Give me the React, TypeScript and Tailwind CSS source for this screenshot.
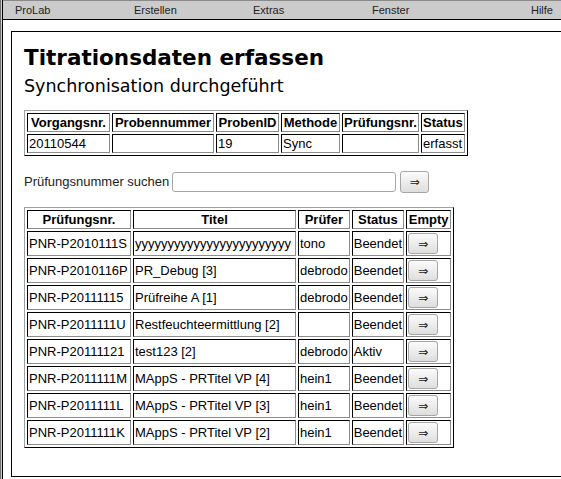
const meta = [
  { label: "Vorgangsnr.", value: "20110544", w: "w-[83px]" },
  { label: "Probennummer", value: "", w: "w-[102px]" },
  { label: "ProbenID", value: "19", w: "w-[63px]" },
  { label: "Methode", value: "Sync", w: "w-[59px]" },
  { label: "Prüfungsnr.", value: "", w: "w-[77px]" },
  { label: "Status", value: "erfasst", w: "w-[43px]" },
];

const rows = [
  { nr: "PNR-P2010111S", titel: "yyyyyyyyyyyyyyyyyyyyyyyy", pruefer: "tono", status: "Beendet" },
  { nr: "PNR-P2010116P", titel: "PR_Debug [3]", pruefer: "debrodo", status: "Beendet" },
  { nr: "PNR-P20111115", titel: "Prüfreihe A [1]", pruefer: "debrodo", status: "Beendet" },
  { nr: "PNR-P2011111U", titel: "Restfeuchteermittlung [2]", pruefer: "", status: "Beendet" },
  { nr: "PNR-P20111121", titel: "test123 [2]", pruefer: "debrodo", status: "Aktiv" },
  { nr: "PNR-P2011111M", titel: "MAppS - PRTitel VP [4]", pruefer: "hein1", status: "Beendet" },
  { nr: "PNR-P2011111L", titel: "MAppS - PRTitel VP [3]", pruefer: "hein1", status: "Beendet" },
  { nr: "PNR-P2011111K", titel: "MAppS - PRTitel VP [2]", pruefer: "hein1", status: "Beendet" },
];

// old-school border="1" look
const tableCls =
  "border-separate border-spacing-[2px] border border-t-[#a0a0a0] border-l-[#a0a0a0] border-r-black border-b-black text-[13px] leading-[15px]";
const cellCls =
  "border border-t-black border-l-black border-r-[#8c8c8c] border-b-[#8c8c8c] p-px text-left font-normal whitespace-nowrap";
const headCls =
  "border border-t-black border-l-black border-r-[#8c8c8c] border-b-[#8c8c8c] p-px text-center font-bold whitespace-nowrap";

function ArrowButton({ className = "" }: { className?: string }) {
  return (
    <button
      className={
        "flex items-center justify-center rounded-[3px] border border-[#a6a6a6] bg-gradient-to-b from-[#fbfbfb] to-[#dedede] text-[12px] leading-none text-[#222] font-['DejaVu_Sans'] " +
        className
      }
    >
      ⇒
    </button>
  );
}

export default function App() {
  return (
    <div className="w-[561px] h-[479px] overflow-hidden bg-white font-['Liberation_Sans',Arial,sans-serif] text-black">
      <div className="h-full border-l border-[#6e6e6e]">
        <div className="h-full border-l border-[#cfcfcf]">
          <div className="h-full border-l border-black flex flex-col">
            {/* Menu */}
            <div className="h-[20px] shrink-0 flex items-center bg-[#cbcbcb] border-t border-t-[#8a8a8a] border-b border-b-black text-[11px] text-[#222]">
              <div className="w-[119px] pl-[12px]">ProLab</div>
              <div className="w-[119px] pl-[12px]">Erstellen</div>
              <div className="w-[119px] pl-[12px]">Extras</div>
              <div className="w-[119px] pl-[12px]">Fenster</div>
              <div className="flex-1 text-right pr-[8px]">Hilfe</div>
            </div>

            {/* Content frame */}
            <div className="ml-[8px] mt-[11px] w-[600px] h-[446px] shrink-0 border border-black px-[12px]">
              <h1 className="mt-[13px] font-['DejaVu_Sans',sans-serif] font-bold text-[21.5px] leading-[25px]">
                Titrationsdaten erfassen
              </h1>
              <h2 className="mt-[6px] font-['DejaVu_Sans',sans-serif] text-[17.5px] leading-[20px]">
                Synchronisation durchgeführt
              </h2>

              <table className={"mt-[14px] " + tableCls}>
                <thead>
                  <tr>
                    {meta.map((m) => (
                      <th key={m.label} className={headCls + " " + m.w}>
                        {m.label}
                      </th>
                    ))}
                  </tr>
                </thead>
                <tbody>
                  <tr>
                    {meta.map((m) => (
                      <td key={m.label} className={cellCls}>
                        {m.value}
                      </td>
                    ))}
                  </tr>
                </tbody>
              </table>

              <div className="mt-[15px] h-[22px] flex items-center text-[13px]">
                <span className="text-[#222]">Prüfungsnummer suchen</span>
                <input className="ml-[3px] w-[224px] h-[20px] border border-[#a6a6a6] rounded-[3px] bg-white outline-none" />
                <ArrowButton className="ml-[4px] w-[29px] h-[22px]" />
              </div>

              <table className={"mt-[14px] " + tableCls}>
                <thead>
                  <tr>
                    <th className={headCls + " w-[104px]"}>Prüfungsnr.</th>
                    <th className={headCls + " w-[163px]"}>Titel</th>
                    <th className={headCls + " w-[50px]"}>Prüfer</th>
                    <th className={headCls + " w-[52px]"}>Status</th>
                    <th className={headCls + " w-[45px]"}>Empty</th>
                  </tr>
                </thead>
                <tbody>
                  {rows.map((r) => (
                    <tr key={r.nr}>
                      <td className={cellCls}>{r.nr}</td>
                      <td className={cellCls}>{r.titel}</td>
                      <td className={cellCls}>{r.pruefer}</td>
                      <td className={cellCls}>{r.status}</td>
                      <td className={cellCls}>
                        <ArrowButton className="w-[30px] h-[21px]" />
                      </td>
                    </tr>
                  ))}
                </tbody>
              </table>
            </div>
          </div>
        </div>
      </div>
    </div>
  );
}
